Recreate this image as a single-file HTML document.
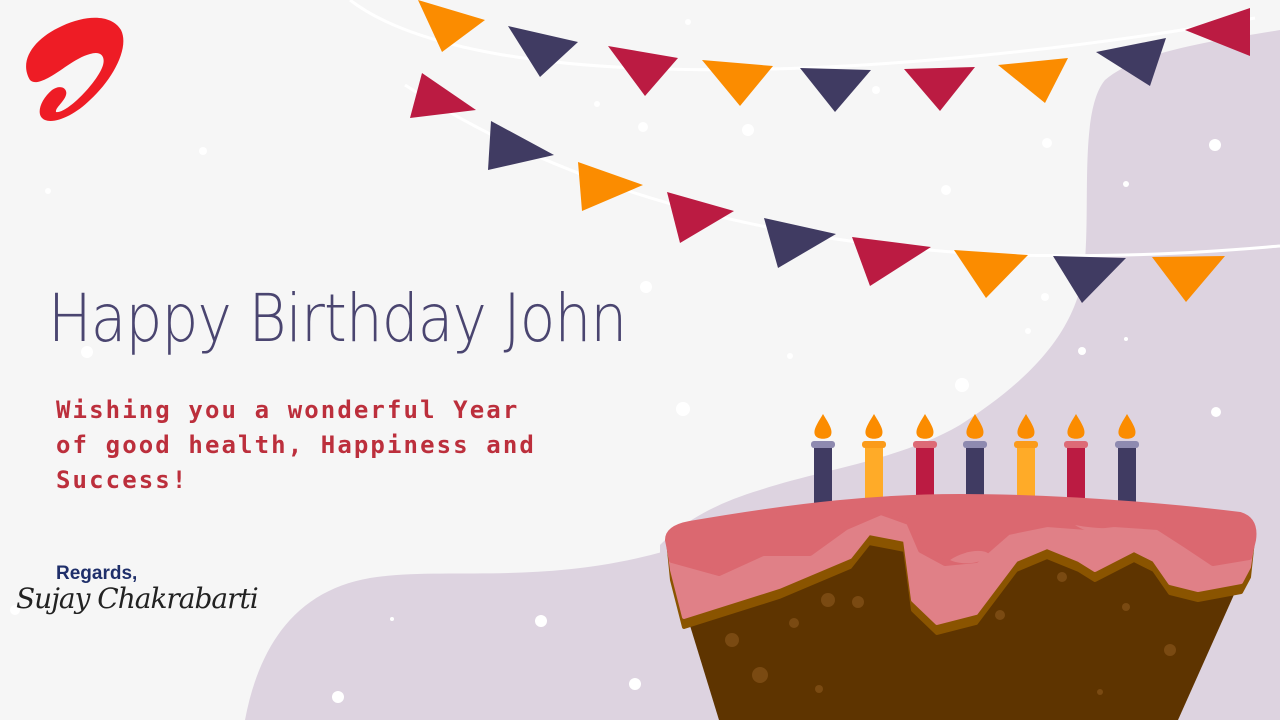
<!DOCTYPE html>
<html><head><style>
html,body{margin:0;padding:0}
body{width:1280px;height:720px;overflow:hidden;background:#f6f6f6;position:relative;font-family:"Liberation Sans",sans-serif}
svg{position:absolute;left:0;top:0}
.t{position:absolute;white-space:nowrap}
</style></head><body>
<svg width="1280" height="720" viewBox="0 0 1280 720">
<path d="M1280,30 C1220,40 1140,50 1105,80 C1080,110 1090,200 1085,260 C1080,330 1030,380 960,425 C900,460 820,470 760,490 C710,505 680,525 660,545 L660,720 L1280,720 Z" fill="#ddd3e0"/>
<path d="M245,720 C260,640 300,590 370,578 C450,565 560,590 700,540 L760,720 Z" fill="#ddd3e0"/>
<g fill="#fff">
<circle cx="748" cy="130" r="6"/><circle cx="1215" cy="145" r="6"/><circle cx="1126" cy="184" r="3"/><circle cx="946" cy="190" r="5"/><circle cx="643" cy="127" r="5"/><circle cx="203" cy="151" r="4"/><circle cx="48" cy="191" r="3"/><circle cx="646" cy="287" r="6"/><circle cx="688" cy="22" r="3"/><circle cx="597" cy="104" r="3"/><circle cx="1082" cy="351" r="4"/><circle cx="962" cy="385" r="7"/><circle cx="683" cy="409" r="7"/><circle cx="1216" cy="412" r="5"/><circle cx="1028" cy="331" r="3"/><circle cx="1126" cy="339" r="2"/><circle cx="541" cy="621" r="6"/><circle cx="338" cy="697" r="6"/><circle cx="635" cy="684" r="6"/><circle cx="392" cy="619" r="2"/><circle cx="87" cy="352" r="6"/><circle cx="1047" cy="143" r="5"/><circle cx="876" cy="90" r="4"/><circle cx="790" cy="356" r="3"/><circle cx="1045" cy="297" r="4"/><circle cx="15" cy="610" r="5"/>
</g>
<path d="M350,0 C480,100 900,80 1255,18" stroke="#fff" stroke-width="3" fill="none"/>
<path d="M405,85 C520,160 700,240 1000,255 C1150,258 1230,250 1280,246" stroke="#fff" stroke-width="3" fill="none"/>
<polygon points="418,0 485,20 442,52" fill="#fb8c00"/>
<polygon points="508,26 578,42 540,77" fill="#403b62"/>
<polygon points="608,46 678,58 645,96" fill="#bb1b42"/>
<polygon points="702,60 773,66 740,106" fill="#fb8c00"/>
<polygon points="800,68 871,70 835,112" fill="#403b62"/>
<polygon points="904,69 975,67 940,111" fill="#bb1b42"/>
<polygon points="998,65 1068,58 1045,103" fill="#fb8c00"/>
<polygon points="1096,52 1166,38 1150,86" fill="#403b62"/>
<polygon points="1185,30 1250,8 1250,56" fill="#bb1b42"/>
<polygon points="422,73 476,110 410,118" fill="#bb1b42"/>
<polygon points="491,121 554,155 488,170" fill="#403b62"/>
<polygon points="578,162 643,185 582,211" fill="#fb8c00"/>
<polygon points="667,192 734,211 680,243" fill="#bb1b42"/>
<polygon points="764,218 836,234 778,268" fill="#403b62"/>
<polygon points="852,237 931,247 870,286" fill="#bb1b42"/>
<polygon points="954,250 1028,255 986,298" fill="#fb8c00"/>
<polygon points="1053,256 1126,258 1082,303" fill="#403b62"/>
<polygon points="1152,257 1225,256 1186,302" fill="#fb8c00"/>
<path d="M30,80 C18,60 35,38 62,26 C88,14 112,15 121,30 C130,48 112,80 90,100 C75,115 55,124 45,120 C35,116 40,100 52,90 C60,84 68,88 66,95 C64,102 55,108 56,112 C65,114 90,90 100,72 C108,58 102,50 90,54 C75,58 60,72 48,78 C40,82 34,84 30,80 Z" fill="#ee1c25"/>
<g>
<rect x="814" y="443" width="18" height="70" fill="#403b62"/><rect x="811" y="441" width="24" height="7" rx="3" fill="#8e8ab0"/>
<rect x="865" y="443" width="18" height="70" fill="#ffab28"/><rect x="862" y="441" width="24" height="7" rx="3" fill="#fb9b1a"/>
<rect x="916" y="443" width="18" height="70" fill="#bb1b42"/><rect x="913" y="441" width="24" height="7" rx="3" fill="#dd6a76"/>
<rect x="966" y="443" width="18" height="70" fill="#403b62"/><rect x="963" y="441" width="24" height="7" rx="3" fill="#8e8ab0"/>
<rect x="1017" y="443" width="18" height="70" fill="#ffab28"/><rect x="1014" y="441" width="24" height="7" rx="3" fill="#fb9b1a"/>
<rect x="1067" y="443" width="18" height="70" fill="#bb1b42"/><rect x="1064" y="441" width="24" height="7" rx="3" fill="#dd6a76"/>
<rect x="1118" y="443" width="18" height="70" fill="#403b62"/><rect x="1115" y="441" width="24" height="7" rx="3" fill="#8e8ab0"/>
</g>
<g fill="#fb8c00">
<path d="M823,414 C817,424 813,430 815,435 C817,440 829,440 831,435 C833,430 829,424 823,414Z"/>
<path d="M874,414 C868,424 864,430 866,435 C868,440 880,440 882,435 C884,430 880,424 874,414Z"/>
<path d="M925,414 C919,424 915,430 917,435 C919,440 931,440 933,435 C935,430 931,424 925,414Z"/>
<path d="M975,414 C969,424 965,430 967,435 C969,440 981,440 983,435 C985,430 981,424 975,414Z"/>
<path d="M1026,414 C1020,424 1016,430 1018,435 C1020,440 1032,440 1034,435 C1036,430 1032,424 1026,414Z"/>
<path d="M1076,414 C1070,424 1066,430 1068,435 C1070,440 1082,440 1084,435 C1086,430 1082,424 1076,414Z"/>
<path d="M1127,414 C1121,424 1117,430 1119,435 C1121,440 1133,440 1135,435 C1137,430 1133,424 1127,414Z"/>
</g>
<path d="M668,540 L676,580 L719,720 L1178,720 L1245,570 L1253,540 Z" fill="#5e3400"/>
<g fill="#7a4a12"><circle cx="828" cy="600" r="7"/><circle cx="760" cy="675" r="8"/><circle cx="732" cy="640" r="7"/><circle cx="794" cy="623" r="5"/><circle cx="1000" cy="615" r="5"/><circle cx="1170" cy="650" r="6"/><circle cx="1126" cy="607" r="4"/><circle cx="1062" cy="577" r="5"/><circle cx="819" cy="689" r="4"/><circle cx="1100" cy="692" r="3"/><circle cx="858" cy="602" r="6"/></g>
<path d="M668,540 Q668,528 690,524 C800,505 880,497 960,497 C1080,497 1200,510 1240,515 Q1256,520 1253,540 L1249,577 L1241,592 L1198,600 L1170,593 L1154,570 L1134,560 L1095,580 L1079,570 L1047,557 L1016,570 L976,623 L937,633 L913,610 L905,550 L869,543 L850,567 L779,597 L684,627 L672,580 Z" fill="#8a5400" stroke="#8a5400" stroke-width="4" stroke-linejoin="round"/>
<path d="M668,540 Q668,528 690,524 C800,505 880,497 960,497 C1080,497 1200,510 1240,515 Q1256,520 1253,540 L1249,567 L1241,582 L1198,590 L1170,583 L1154,560 L1134,550 L1095,570 L1079,560 L1047,547 L1016,560 L976,613 L937,623 L913,600 L905,540 L869,533 L850,557 L779,587 L684,617 L672,570 Z" fill="#e08087" stroke="#e08087" stroke-width="4" stroke-linejoin="round"/>
<path d="M668,540 Q668,528 690,524 C800,505 880,497 960,497 C1080,497 1200,510 1240,515 Q1256,520 1253,540 L1249,557 L1213,563 L1186,545 L1158,527 L1114,524 L1087,527 L1047,524 L1008,532 L976,560 L945,563 L921,550 L909,522 L881,512 L846,527 L810,553 L763,553 L719,573 L672,560 Z" fill="#db6870" stroke="#db6870" stroke-width="6" stroke-linejoin="round"/>
<path d="M950,560 C965,550 985,548 990,555 C980,565 960,565 950,560Z" fill="#e08087"/>
<path d="M1075,525 C1090,535 1120,540 1150,532 C1130,528 1100,530 1075,525Z" fill="#e08087"/>
</svg>
<div class="t" style="left:48px;top:280px;font-size:66px;color:#4a4570;letter-spacing:-1px;font-family:'DejaVu Sans',sans-serif;font-weight:200;transform:scaleX(0.88);transform-origin:left">Happy Birthday John</div>
<div class="t" style="left:56px;top:393px;font-size:24px;line-height:35px;color:#bc2f3c;font-weight:bold;font-family:'DejaVu Sans Mono','Liberation Mono',monospace;letter-spacing:2.1px">Wishing you a wonderful Year<br>of good health, Happiness and<br>Success!</div>
<div class="t" style="left:56px;top:563px;font-size:19px;color:#1f2f6a;font-weight:bold">Regards,</div>
<div class="t" style="left:16px;top:582px;font-size:28px;color:#222;font-family:'DejaVu Serif',serif;font-style:italic;letter-spacing:-1px">Sujay Chakrabarti</div>
</body></html>
